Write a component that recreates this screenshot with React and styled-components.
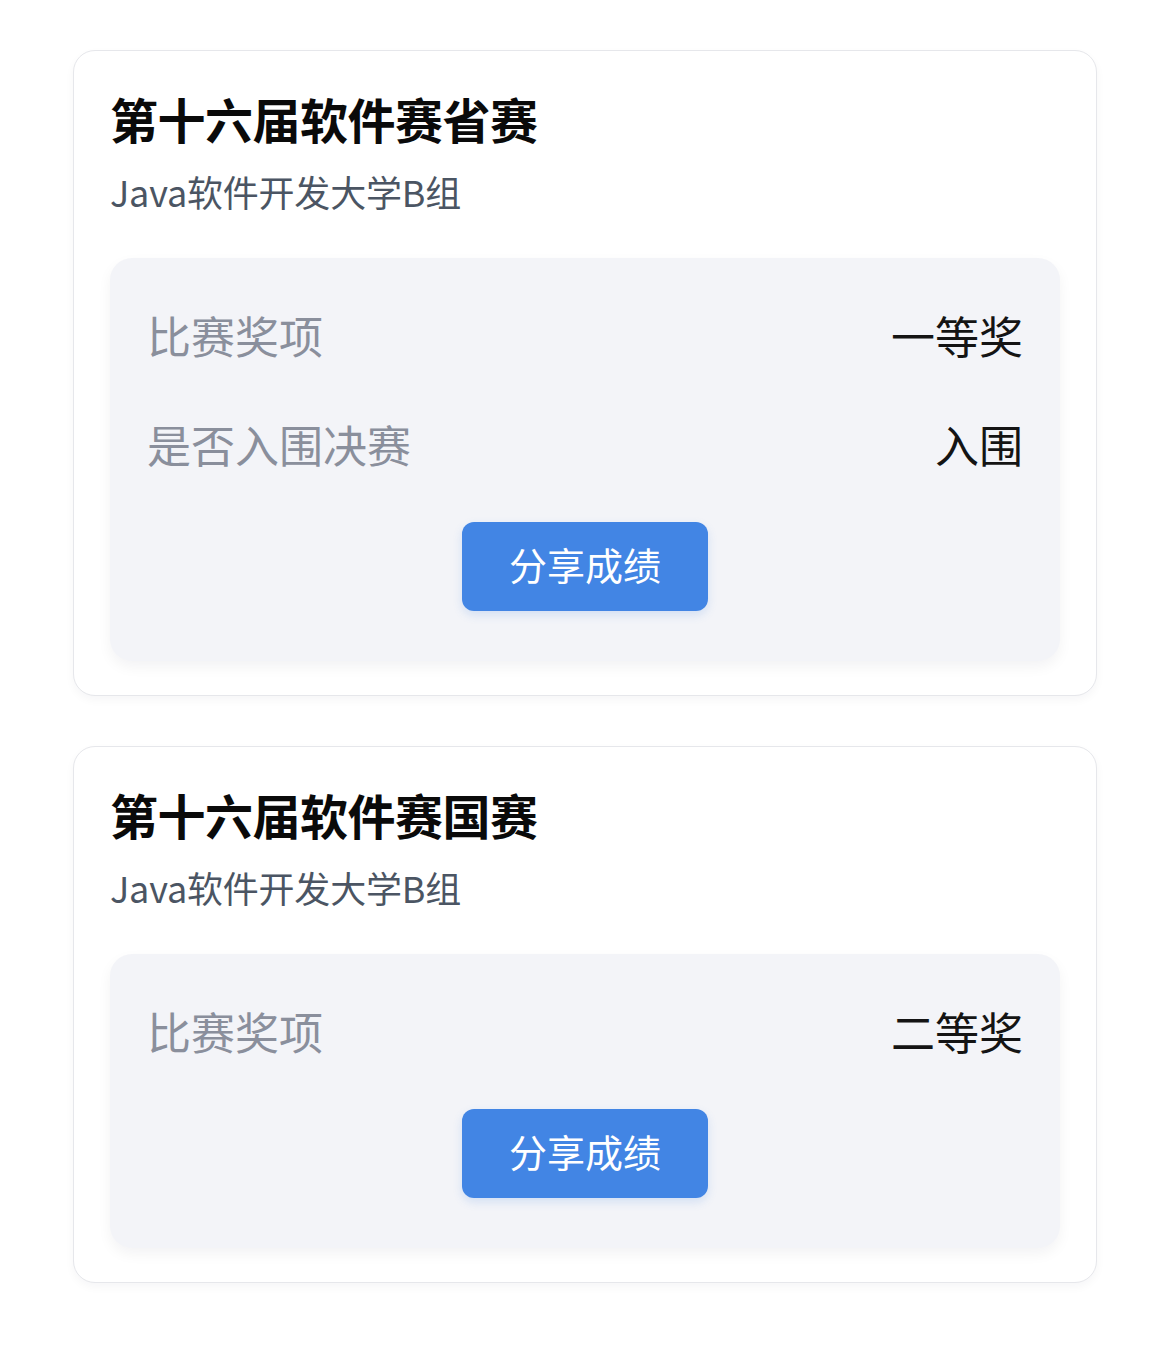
import React from "react";
import styled, { createGlobalStyle } from "styled-components";

const GlobalStyle = createGlobalStyle`
  * { box-sizing: border-box; }
  html, body { margin: 0; padding: 0; background: #ffffff; }
  body {
    font-family: "Noto Sans CJK SC", "Noto Sans", sans-serif;
    -webkit-font-smoothing: antialiased;
  }
`;

const Page = styled.div`
  display: flex;
  flex-direction: column;
  gap: 50px;
  padding: 50px 73px 78px;
`;

const Card = styled.section`
  background: #ffffff;
  border: 1px solid #e6e7eb;
  border-radius: 22px;
  padding: 34px 36px 34px;
  box-shadow: 0 4px 10px rgba(17, 24, 39, 0.04);
`;

const Title = styled.h2`
  margin: 0;
  font-size: 48px;
  line-height: 67px;
  font-weight: 700;
  color: #0a0a0a;
  letter-spacing: -0.5px;
`;

const Subtitle = styled.div`
  margin-top: 12px;
  font-size: 36px;
  line-height: 54px;
  color: #4b5563;
  letter-spacing: -0.2px;
`;

const Panel = styled.div`
  margin-top: 40px;
  background: #f3f4f8;
  border-radius: 22px;
  padding: 38px 37px 50px;
  display: flex;
  flex-direction: column;
  box-shadow: 0 6px 14px rgba(17, 24, 39, 0.05);
`;

const Rows = styled.div`
  display: flex;
  flex-direction: column;
  gap: 31px;
`;

const Row = styled.div`
  display: flex;
  justify-content: space-between;
  align-items: center;
  height: 78px;
  font-size: 44px;
`;

const Label = styled.span`
  color: #8a8f9c;
`;

const Value = styled.span`
  color: #141414;
`;

const ButtonWrap = styled.div`
  display: flex;
  justify-content: center;
  margin-top: 39px;
`;

const ShareButton = styled.button`
  width: 246px;
  height: 89px;
  border: none;
  border-radius: 12px;
  background: #4285e4;
  color: #ffffff;
  font-family: inherit;
  font-size: 38px;
  line-height: 1;
  padding: 0 0 6px;
  box-shadow: 0 4px 10px rgba(66, 133, 228, 0.18);
  cursor: pointer;
`;

const data = [
  {
    title: "第十六届软件赛省赛",
    sub: "Java软件开发大学B组",
    rows: [
      ["比赛奖项", "一等奖"],
      ["是否入围决赛", "入围"],
    ],
  },
  {
    title: "第十六届软件赛国赛",
    sub: "Java软件开发大学B组",
    rows: [["比赛奖项", "二等奖"]],
  },
];

export default function App() {
  return (
    <>
      <GlobalStyle />
      <Page>
        {data.map((c) => (
          <Card key={c.title}>
            <Title>{c.title}</Title>
            <Subtitle>{c.sub}</Subtitle>
            <Panel>
              <Rows>
                {c.rows.map(([l, v]) => (
                  <Row key={l}>
                    <Label>{l}</Label>
                    <Value>{v}</Value>
                  </Row>
                ))}
              </Rows>
              <ButtonWrap>
                <ShareButton>分享成绩</ShareButton>
              </ButtonWrap>
            </Panel>
          </Card>
        ))}
      </Page>
    </>
  );
}
